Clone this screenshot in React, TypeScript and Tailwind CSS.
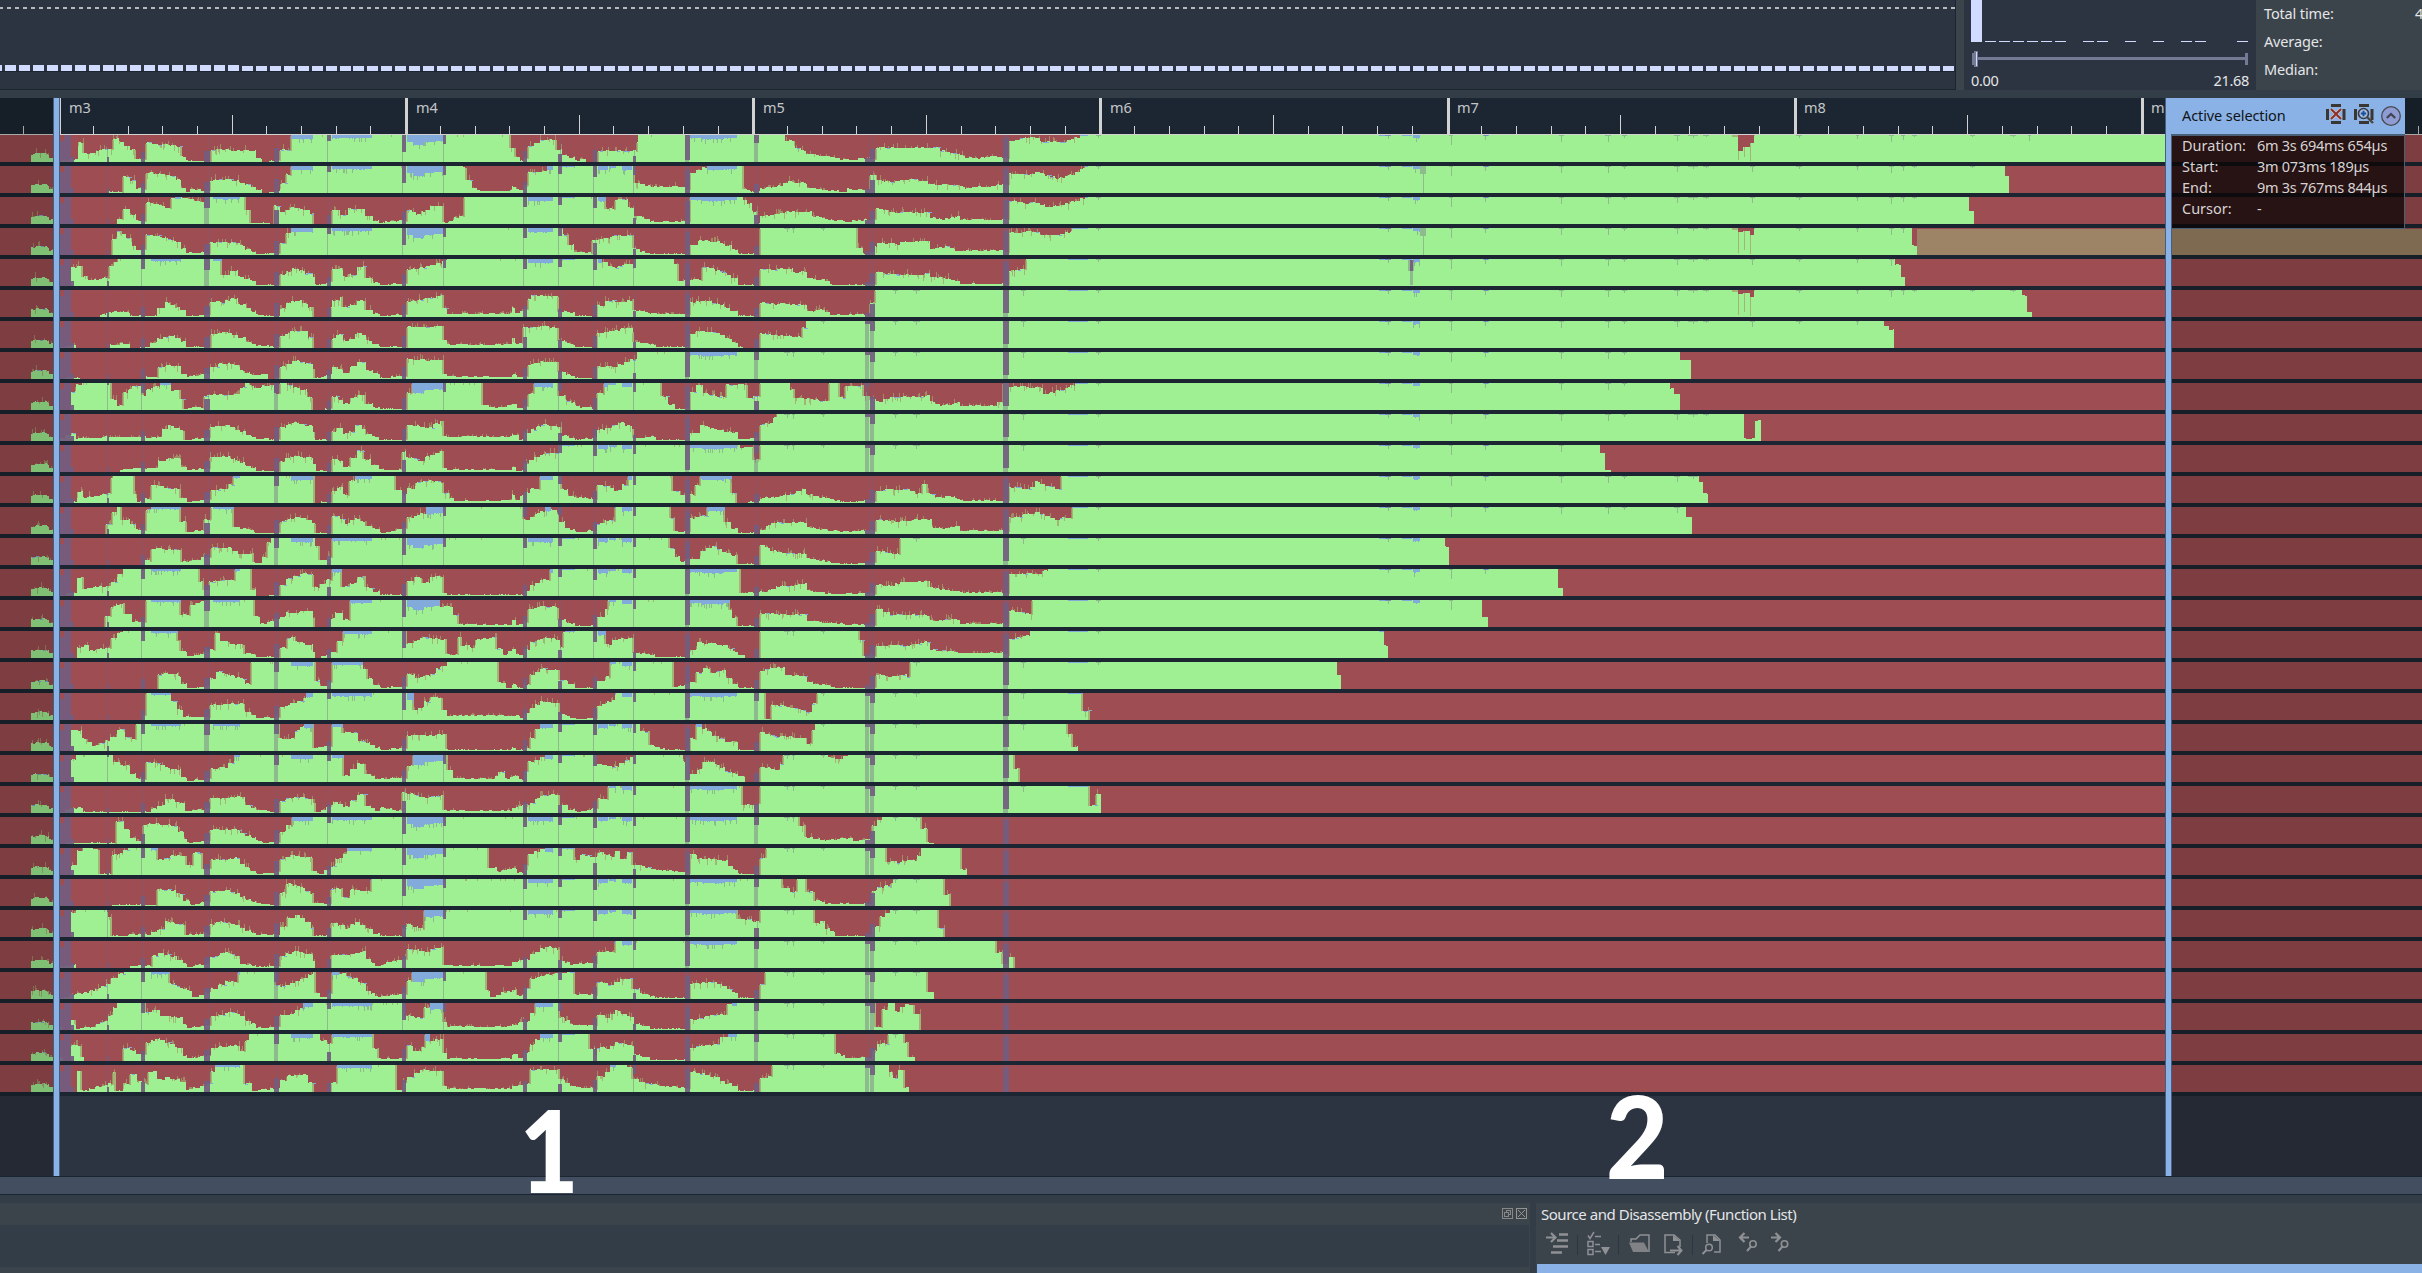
import React from "react";

/* Each lane is a list of "x:height" samples; heights run from 0 to 27 pixels. */
const LANES: string[] = [
  "75:2 78:19 84:8 108:13 113:23 124:16 130:12 136:3 146:19 176:15 182:5 186:1 205:1 211:12 235:11 256:3 262:0 275:2 280:12 291:27 511:13 516:4 520:1 524:3 528:16 540:22 557:12 562:6 575:1 580:3 586:0 598:11 637:20 638:27 785:21 795:13 806:8 825:5 840:2 870:3 876:14 935:14 940:11 955:8 965:4 975:3 985:5 1003:4 1009:21 1030:25 1040:20 1060:20 1080:26 1107:27 2167:0",
  "108:1 123:16 130:12 136:4 146:20 160:18 170:17 176:13 181:5 186:1 190:3 206:2 210:12 225:14 245:8 256:3 262:0 275:2 280:9 286:18 291:27 463:25 467:13 472:5 477:2 512:6 516:3 524:8 528:20 542:22 547:27 635:10 650:6 686:3 690:20 707:27 743:27 744:3 750:1 758:1 760:4 778:7 788:11 806:9 807:5 825:2 845:1 847:4 862:2 870:17 877:12 890:10 900:13 925:12 928:9 960:6 965:4 997:8 1003:8 1009:19 1025:18 1035:20 1045:17 1055:14 1070:18 1080:24 1085:27 2005:16 2009:0",
  "117:5 123:15 130:9 136:3 146:21 165:16 171:25 175:27 200:22 205:27 245:27 246:14 251:1 270:0 274:18 280:12 290:16 303:14 310:10 314:0 332:14 340:9 348:15 357:15 365:8 373:3 379:1 402:3 407:14 416:9 425:14 430:18 441:17 444:1 459:8 464:27 598:27 606:15 615:24 628:16 634:8 644:5 650:2 686:2 690:27 738:27 747:20 752:12 758:1 760:8 775:9 785:12 805:12 812:7 825:4 845:2 870:4 876:15 895:11 925:11 930:6 940:4 955:7 960:4 1003:5 1009:23 1025:20 1035:21 1045:16 1060:19 1075:23 1085:26 1090:27 1969:13 1974:0",
  "112:15 117:23 126:17 132:9 136:5 146:20 160:17 176:13 181:6 186:2 206:2 210:12 235:12 245:5 256:1 275:2 280:12 286:22 291:27 562:27 563:20 569:10 574:2 592:15 605:16 614:19 620:19 634:6 640:3 650:1 686:1 690:10 698:14 715:13 725:9 732:5 738:1 758:0 760:27 857:27 858:7 863:1 870:2 875:8 877:12 895:10 905:13 925:14 930:6 945:8 955:4 1003:3 1009:22 1035:23 1040:20 1055:20 1070:23 1072:27 1912:9 1917:0",
  "71:18 77:20 83:9 88:5 104:8 109:20 114:24 118:27 221:27 222:11 230:15 238:9 250:5 256:1 275:1 280:11 292:17 305:12 313:9 315:1 331:4 332:16 340:17 343:9 348:11 357:19 366:7 373:3 380:1 402:2 407:16 430:20 447:27 596:27 608:20 612:18 627:22 634:27 673:27 674:22 679:5 686:0 690:6 702:18 715:15 722:13 731:8 738:1 758:0 760:16 787:17 793:13 805:14 807:7 825:5 830:1 860:1 870:2 876:13 890:11 925:12 930:9 955:5 960:2 1003:2 1009:15 1020:16 1026:27 1895:21 1901:9 1905:0",
  "100:2 112:5 124:4 130:1 145:1 157:9 165:14 180:7 186:1 205:2 210:15 220:14 230:18 238:12 246:8 256:2 262:1 275:1 280:8 286:14 295:16 308:9 314:0 331:9 332:16 340:20 343:10 350:12 357:16 366:7 373:3 380:1 402:2 407:15 425:18 441:22 444:9 447:3 512:9 515:4 524:8 528:18 531:21 557:20 559:5 570:4 575:1 592:0 597:11 605:16 620:15 633:17 634:6 650:3 686:2 690:14 700:16 718:12 730:6 738:1 758:0 760:14 775:12 780:14 790:12 806:12 807:5 820:7 830:2 865:1 870:14 875:27 2022:21 2027:5 2032:0",
  "72:3 76:0 110:3 125:4 130:0 145:1 150:5 157:9 168:12 181:6 186:1 205:1 211:14 225:15 238:10 246:5 256:2 275:1 280:12 290:16 300:17 308:10 314:0 332:9 336:13 343:7 349:9 355:14 362:12 366:7 372:4 379:1 402:1 407:21 420:20 434:22 444:8 447:3 512:9 515:4 523:20 530:21 556:20 559:7 575:1 592:0 597:15 610:16 625:20 633:15 634:6 650:3 656:1 686:1 690:14 700:17 715:15 725:9 732:5 738:1 743:0 758:0 760:14 790:11 800:10 802:20 806:27 1884:22 1889:18 1894:0",
  "71:1 80:0 146:2 158:12 166:13 181:5 187:2 205:5 210:12 218:15 235:14 240:8 250:4 268:0 275:1 280:12 292:18 305:15 313:10 315:1 331:4 332:11 343:6 350:12 357:16 366:8 373:5 380:1 402:2 407:20 425:18 435:19 444:5 447:2 512:4 517:2 524:3 528:14 540:17 556:17 559:7 566:4 575:1 592:0 597:12 610:12 618:14 630:19 637:27 1680:18 1691:0",
  "71:18 76:25 82:27 109:27 112:10 117:4 123:17 132:23 143:14 146:20 155:23 160:27 171:19 181:10 184:1 195:2 204:14 215:15 235:15 240:22 245:26 254:22 262:24 274:16 280:27 293:22 300:20 307:12 313:0 331:1 332:13 343:6 350:12 357:15 366:6 373:2 380:1 402:1 407:17 412:27 482:27 483:4 495:2 512:6 517:2 524:4 528:16 534:27 558:27 559:14 566:9 575:4 580:2 592:1 597:16 604:27 661:27 662:13 668:5 675:1 686:1 690:18 696:24 703:16 715:13 726:25 748:12 758:14 760:27 788:27 790:20 795:12 818:9 829:26 840:12 845:24 864:14 876:8 890:13 925:14 930:8 940:4 957:7 960:4 997:8 1003:27 1009:23 1035:22 1043:16 1060:20 1075:26 1085:27 1670:21 1674:15 1680:0",
  "71:7 76:2 90:3 108:4 146:2 157:4 162:12 168:15 180:10 185:1 205:3 210:14 225:16 240:9 246:5 256:2 275:1 280:13 292:18 305:15 313:9 315:1 332:9 336:13 343:7 349:9 355:16 362:12 366:7 372:4 379:1 402:1 407:16 425:13 433:17 440:20 444:4 447:4 512:6 519:1 524:8 531:11 541:16 557:14 562:5 575:1 592:3 597:11 605:13 618:18 632:12 634:3 650:4 656:1 686:1 690:8 700:16 710:12 730:8 738:2 758:0 760:16 770:18 773:23 777:27 1744:2 1755:20 1761:0",
  "120:2 146:3 158:11 166:13 181:5 187:2 205:3 210:15 225:15 235:11 245:6 256:1 275:1 280:10 290:15 305:14 313:8 316:1 332:12 338:11 343:5 350:14 357:21 364:12 371:6 379:2 402:20 406:14 418:11 425:15 440:20 444:3 447:2 512:5 516:1 524:8 534:15 545:19 558:27 740:24 754:12 760:27 1600:19 1605:2 1611:0",
  "71:1 77:11 83:5 105:9 111:25 113:27 135:8 137:1 145:4 151:18 170:14 181:5 187:1 206:4 211:13 225:13 228:18 233:27 314:27 315:0 327:1 332:12 337:15 343:8 349:22 355:27 395:27 396:12 402:8 407:14 415:20 427:22 440:20 444:10 450:5 454:2 512:8 515:3 524:10 530:14 540:27 557:27 562:13 568:6 592:3 597:17 605:17 614:12 622:18 628:27 672:27 673:12 680:8 686:0 690:8 695:18 700:27 731:27 732:10 737:0 758:1 760:4 775:6 790:9 802:13 806:8 825:4 840:1 870:2 876:12 890:13 905:13 915:9 922:18 928:9 935:5 950:6 960:2 1003:2 1009:15 1022:14 1030:16 1035:21 1045:17 1055:14 1061:27 1699:20 1703:9 1708:0",
  "106:10 112:22 117:26 122:14 130:9 136:4 146:24 151:27 180:27 181:12 187:2 200:3 204:14 211:27 232:27 234:6 250:4 254:1 275:1 280:12 290:15 300:16 312:10 316:1 332:18 340:15 345:10 355:15 365:8 372:5 380:1 402:5 407:16 420:20 426:27 523:27 524:14 530:17 540:22 545:27 557:20 559:12 565:5 575:2 592:3 597:10 605:13 615:27 670:27 671:15 675:2 690:15 700:18 707:27 724:27 725:12 731:5 738:1 758:0 760:4 771:11 805:11 807:6 820:4 840:2 870:3 876:14 895:12 920:14 932:6 940:5 955:8 960:3 1003:2 1009:16 1028:20 1035:22 1045:18 1055:14 1060:16 1072:27 1686:17 1692:0",
  "145:4 151:16 165:15 182:3 195:5 206:8 211:17 225:17 238:11 254:2 262:8 267:22 271:27 314:27 315:18 320:4 327:8 332:27 668:27 670:16 675:8 680:3 690:6 700:14 712:19 722:13 731:9 738:1 758:0 760:20 770:14 782:12 805:10 807:6 825:3 840:1 870:2 876:14 885:12 898:10 900:27 1445:18 1449:0",
  "72:3 77:18 84:7 106:10 111:13 117:21 123:27 190:27 200:14 204:5 209:14 225:16 235:27 251:27 252:6 256:0 275:1 280:11 286:17 300:22 313:20 314:8 320:12 326:16 332:27 342:9 350:12 357:19 366:8 373:4 380:1 402:1 407:15 414:18 422:13 430:19 444:2 447:1 524:4 530:10 540:16 550:27 740:27 741:2 760:4 768:6 776:9 805:12 807:5 825:2 870:2 876:11 890:9 900:14 925:14 930:8 945:5 960:3 1003:2 1009:21 1035:22 1048:27 1558:8 1563:0",
  "105:10 111:20 120:23 125:12 132:5 146:27 181:12 190:22 205:27 254:27 255:10 260:3 280:10 286:14 305:15 313:8 315:0 331:8 335:14 343:7 350:27 434:27 440:20 453:12 459:3 463:2 512:7 516:2 524:5 528:17 540:21 557:19 559:7 566:4 575:1 597:10 605:18 608:27 725:27 730:17 732:9 738:1 758:0 760:13 790:12 805:13 807:5 825:4 845:2 870:2 876:18 890:12 925:11 930:6 955:7 960:3 1003:2 1009:16 1025:13 1032:27 1482:10 1488:0",
  "77:10 84:13 89:7 105:10 111:19 117:25 123:27 178:17 181:6 187:2 200:4 209:8 215:25 220:17 235:13 245:4 256:1 275:1 280:10 287:20 295:16 305:13 313:5 315:0 331:5 337:16 343:27 402:27 407:14 420:20 440:18 447:3 458:20 462:12 470:10 475:18 492:20 497:9 503:3 512:8 516:3 524:8 530:16 545:20 556:18 560:10 563:25 565:27 597:27 606:13 612:18 628:20 634:5 650:3 655:1 686:1 690:8 697:15 722:12 728:9 738:3 745:0 760:27 858:27 860:18 864:2 876:12 910:13 925:16 930:8 958:5 1003:3 1009:19 1026:22 1030:27 1384:12 1388:0",
  "158:14 170:15 178:12 181:5 187:1 205:2 210:10 216:17 225:14 240:10 245:5 251:27 315:27 316:8 320:2 327:7 332:27 362:27 363:20 368:10 373:4 380:1 402:2 407:14 415:10 430:15 436:20 440:22 447:27 498:27 499:6 506:1 512:4 517:1 524:4 530:14 540:20 556:18 560:8 568:5 575:1 592:1 597:8 605:12 610:27 672:27 674:2 690:6 696:16 703:20 710:16 722:18 726:10 733:5 738:1 758:0 760:17 770:21 785:13 805:12 807:6 825:3 835:1 870:1 876:14 885:12 905:15 907:12 910:27 1337:14 1341:0",
  "143:4 146:27 170:27 171:18 177:10 183:3 205:3 210:15 235:16 245:8 256:2 275:2 280:12 290:16 303:22 306:27 412:27 414:10 418:12 424:18 430:22 443:10 447:4 520:2 524:6 530:11 540:18 556:17 560:5 575:1 592:2 597:14 612:20 615:27 763:27 766:1 771:15 790:12 806:8 812:16 817:27 1083:9 1090:0",
  "71:20 82:12 92:5 105:10 110:14 117:21 125:14 132:12 136:27 276:27 280:12 295:20 304:27 313:27 314:3 327:4 332:27 343:18 350:18 358:10 370:5 380:1 402:2 407:15 430:15 443:17 447:1 512:3 516:1 524:2 530:13 535:22 540:27 637:27 640:19 650:5 665:1 686:1 690:12 696:27 702:22 712:15 725:9 738:1 758:0 760:18 775:14 805:13 807:7 812:20 815:27 1068:17 1073:4 1078:0",
  "71:22 76:27 106:27 113:20 120:16 130:8 136:3 146:20 155:18 170:12 181:4 187:1 206:3 211:13 225:14 228:18 234:27 343:27 344:6 350:13 357:18 366:8 375:3 402:4 407:16 413:27 444:27 448:12 453:3 495:5 498:10 505:3 515:6 519:2 524:10 528:20 545:27 592:27 597:18 612:15 625:22 634:27 678:26 683:20 686:24 690:8 697:12 702:20 715:17 725:10 738:5 745:0 760:15 775:12 780:17 783:27 828:24 835:22 843:25 848:27 1015:13 1020:0",
  "77:5 83:1 110:1 145:1 157:7 165:14 180:10 185:2 205:4 210:15 225:14 235:16 245:8 256:2 275:1 280:12 292:15 305:14 313:10 316:1 331:8 333:11 343:6 350:12 357:18 366:6 375:2 380:5 392:2 402:20 407:19 425:15 441:18 444:3 447:2 512:5 524:8 530:10 540:17 556:18 560:8 568:3 575:1 592:4 598:14 608:27 737:27 743:8 750:8 758:9 760:27 1090:7 1096:18 1101:0",
  "71:1 116:22 124:14 130:6 136:3 143:19 155:20 170:18 178:12 184:5 187:1 205:3 210:14 235:14 245:8 256:3 262:1 275:2 280:12 286:18 292:27 795:27 800:18 806:6 820:3 848:6 853:3 870:6 872:18 877:24 882:27 922:15 928:1 934:0",
  "71:9 77:24 83:27 98:25 100:1 112:20 118:21 128:27 153:27 158:15 170:19 187:10 193:22 203:6 211:15 225:15 235:17 240:10 250:4 256:1 275:3 280:15 290:20 305:17 313:4 317:1 331:8 335:16 343:20 347:27 487:27 489:7 497:3 512:6 517:2 524:10 528:21 545:27 572:27 575:15 580:20 590:17 597:22 610:18 615:24 620:16 627:22 633:10 645:7 656:5 686:2 690:20 697:16 722:14 728:8 738:1 758:0 760:17 766:27 883:27 887:13 897:12 907:15 915:13 917:19 921:27 962:5 967:0",
  "112:1 146:1 157:16 170:15 176:12 183:5 190:1 205:4 210:14 225:16 235:12 245:6 256:2 275:1 280:13 286:22 300:18 310:12 314:2 331:16 332:17 343:8 350:16 365:15 371:27 777:27 783:18 790:14 797:27 807:14 815:5 825:2 870:2 872:15 877:18 890:22 893:27 945:11 951:0",
  "71:24 76:27 108:19 112:1 145:2 157:7 165:15 180:12 186:2 205:3 210:12 220:15 235:12 245:6 256:2 275:2 280:10 287:19 295:22 305:15 311:9 314:1 331:14 345:8 355:15 365:8 373:3 380:1 402:9 407:12 418:8 424:27 738:18 752:15 760:27 811:27 815:13 820:16 825:8 835:1 870:2 872:10 880:20 890:27 939:9 945:0",
  "71:3 76:0 130:2 152:12 158:15 170:11 183:4 187:1 205:4 210:11 225:15 235:12 240:4 256:1 275:2 280:12 292:16 305:14 313:6 315:0 331:12 350:14 360:16 366:8 375:2 402:9 407:19 425:15 435:20 444:3 447:2 512:6 524:8 530:14 545:21 557:18 560:7 570:3 592:5 597:16 610:16 615:27 997:15 1003:4 1009:11 1015:0",
  "83:6 95:10 106:14 111:21 118:25 124:27 170:15 180:10 187:8 192:2 205:6 211:10 225:17 238:27 276:14 280:12 290:16 300:20 308:24 313:27 316:6 320:2 328:5 332:27 352:20 358:16 366:8 375:2 402:5 407:18 412:27 444:5 485:27 487:8 490:2 512:9 517:3 524:10 530:20 545:24 570:26 575:4 592:4 597:17 608:14 620:20 633:10 640:5 655:1 686:1 690:15 712:16 722:13 732:6 738:1 758:0 760:15 765:27 928:7 934:0".replace("444:5 485:27", "485:27"),
  "60:3 62:0 71:10 76:1 91:3 100:8 108:14 113:22 117:27 146:18 152:20 160:14 175:12 183:5 187:2 206:4 211:13 225:17 235:16 245:9 256:2 275:3 280:14 290:16 300:22 303:27 403:27 405:14 415:12 424:22 430:27 444:8 447:3 512:5 524:8 530:16 535:27 558:27 560:12 570:5 592:4 597:15 605:12 615:19 627:13 634:6 650:1 686:0 690:10 710:14 722:15 727:25 732:27 870:27 876:3 882:20 888:26 895:18 905:25 915:16 921:0",
  "60:3 63:0 71:15 82:4 84:0 123:13 136:6 146:18 155:22 165:18 175:13 183:5 187:2 206:5 211:13 225:14 235:15 240:10 245:20 249:27 314:27 320:20 327:17 332:27 372:27 374:12 379:2 402:2 407:15 413:10 421:14 425:27 430:20 440:22 444:8 447:2 512:6 518:2 524:8 530:16 535:21 540:27 588:27 590:12 595:5 597:13 605:12 615:18 632:14 634:6 650:1 686:1 690:13 712:16 720:24 728:27 833:27 836:7 845:2 870:3 872:10 877:17 888:26 905:18 909:4 915:0",
  "77:20 82:1 108:8 113:20 116:1 123:8 130:18 137:10 146:8 148:20 157:12 165:15 180:10 186:2 206:8 211:20 215:27 244:27 245:8 252:1 275:3 280:11 287:16 300:17 308:9 314:0 331:9 337:27 395:27 397:2 403:9 407:15 420:22 430:20 441:20 444:5 447:3 512:6 524:8 530:22 557:22 560:12 570:5 592:3 597:15 605:20 610:27 632:24 633:12 645:8 665:5 686:3 690:20 700:18 715:14 725:8 738:1 758:0 760:14 768:16 772:27 887:27 889:20 893:14 898:22 905:4 909:0",
];

/* x, width, depth when the lane is busy, height when the lane is idle */
const EVENTS = [
  [107, 2, 2, 5],
  [141, 4, 10, 10],
  [204, 6, 11, 11],
  [274, 5, 10, 14],
  [327, 4, 6, 9],
  [402, 4, 17, 12],
  [443, 3, 9, 0],
  [523, 4, 10, 11],
  [558, 4, 8, 8],
  [593, 4, 11, 12],
  [633, 3, 9, 6],
  [685, 5, 25, 23],
  [754, 5, 8, 9],
  [865, 5, 3, 4],
  [870, 5, 10, 13],
  [1003, 6, 23, 24],
];

/* start, end, depth of the waiting-time caps */
const CAPS = [
  [151, 181, 2],
  [213, 240, 2],
  [291, 313, 4],
  [332, 372, 3],
  [407, 413, 7],
  [413, 424, 10],
  [424, 434, 7],
  [434, 444, 6],
  [528, 553, 4],
  [561, 575, 1],
  [598, 608, 4],
  [609, 616, 2],
  [622, 632, 4],
  [690, 702, 3],
  [702, 724, 4],
  [724, 737, 3],
  [1068, 1088, 1],
  [1379, 1391, 1],
  [1402, 1412, 1],
  [1413, 1420, 3],
  [1484, 1489, 1],
];

/* x, width, stem depth of the short marks on top of busy lanes */
const NIBS = [
  [784, 6, 3],
  [792, 3, 4],
  [821, 4, 2],
  [893, 5, 3],
  [913, 7, 3],
  [1021, 5, 5],
  [1096, 5, 2],
  [1385, 6, 3],
  [1449, 4, 9],
  [1483, 5, 4],
  [1559, 5, 6],
  [1605, 6, 6],
  [1622, 5, 2],
  [1674, 6, 5],
  [1688, 10, 2],
  [1703, 6, 1],
  [1750, 5, 5],
  [1796, 6, 2],
  [1856, 3, 3],
  [1889, 5, 6],
  [1901, 4, 4],
  [1912, 5, 1],
  [1970, 5, 1],
  [2010, 6, 1],
  [2028, 3, 5],
];

const H = 27;

function rand(seed: number) {
  const v = Math.sin(seed * 127.1 + 311.7) * 43758.5453;
  return v - Math.floor(v);
}

function heightsOf(lane: string): number[] {
  const out = new Array<number>(2422).fill(0);
  const pts = ("31:7 35:8 47:7 49:4 53:0 " + lane).split(" ").map((p) => p.split(":").map(Number));
  pts.forEach(([x0, h0], i) => {
    const next = pts[i + 1];
    if (!next) return;
    const [x1, h1] = next;
    const steps = Math.max(1, Math.round((x1 - x0) / 6));
    // small differences ramp in short steps, large ones jump at the next sample
    const ramps = steps > 1 && x1 - x0 < 34 && h1 > 0 && Math.abs(h1 - h0) < 8;
    for (let x = x0; x < x1; x++) {
      const k = Math.floor(((x - x0) / (x1 - x0)) * steps);
      out[x] = ramps ? h0 + ((h1 - h0) * k) / steps : h0;
    }
  });
  return out;
}

const box = (x: number, y: number, w: number, h: number) => `M${x} ${y}h${w}v${h}h${-w}z`;

function Lane({ index }: { index: number }) {
  const h = heightsOf(LANES[index]);
  let green = "";
  let olive = "";
  let blue = "";
  let purple = "";
  let mist = "";
  let notch = "";

  let start = 0;
  const level = h.map((v) => (v >= 26 ? H : Math.round(v)));
  const wobble = level.map((v, x) => {
    if (v < 2 || v >= H) return v === 1 && rand(x * 3 + index * 71) > 0.8 ? 2 : v;
    return Math.min(H, v + (rand(Math.floor(x / 3) * 1.7 + index * 37) > 0.6 ? 1 : 0));
  });
  for (let x = 1; x <= 2422; x++) {
    if (x === 2422 || wobble[x] !== wobble[start]) {
      if (wobble[start] > 0) green += box(start, H - wobble[start], x - start, wobble[start]);
      start = x;
    }
  }

  for (let x = 32; x < 1100; x++) {
    const v = wobble[x];
    const r = rand(x * 1.31 + index * 53.7);
    if (v > 2 && v < 26) {
      if (r > 0.8) {
        const up = Math.min(H - v, 1 + Math.floor(rand(x + index * 11) * (v > 6 ? 5 : 2)));
        olive += box(x, H - v - up, 1, up);
      } else if (r < 0.1 && v > 7) {
        olive += box(x, H - v, 1, 2 + Math.floor(rand(x * 7 + index) * 5));
      } else if (r > 0.72 && r < 0.76 && v > 7) {
        blue += box(x, H - v, 3, 1);
      }
    } else if (v === H && r > 0.965 && x < 760) {
      olive += box(x, 0, 1, 2);
    }
    const prev = wobble[x - 1];
    if (Math.abs(prev - v) > 8 && x > 80) {
      olive += v > prev ? box(x - 1, H - v + 1, 2, v - prev) : box(x - 2, H - prev, 2, prev - v);
    }
  }

  CAPS.forEach(([a, b, depth]) => {
    for (let x = a; x < b; x++) {
      if (level[x] === H) {
        const d = depth + (depth > 1 && rand(x * 2.3 + index) > 0.82 ? 1 : 0);
        blue += box(x, 0, 1, d);
        if (depth > 1 && rand(x * 5.1 + index) > 0.88) mist += box(x, d, 1, 4);
      }
    }
  });

  NIBS.forEach(([x, w, d]) => {
    if (level[x] === H && level[x + w] === H) {
      mist += box(x, 0, w, 1) + box(x + Math.floor(w / 2), 1, 1, d);
    }
  });

  EVENTS.forEach(([x, w, d, idle]) => {
    const busy = Math.max(level[x], level[x - 3]) > 22 || (x < 1000 && level[x + 1] > 22);
    if (busy) {
      purple += box(x, 0, w, d);
      mist += box(x, d, w > 4 ? w - 1 : 1, H - d);
    } else if (idle) {
      purple += box(x, H - idle, w, idle);
      mist += box(x + w - 2, 0, 1, H - idle);
      if (w > 4 && idle > 20) mist += box(x, 0, w, H - idle);
    }
  });

  purple += box(64, 0, 7, H) + box(60, 6, 4, H - 6) + box(71, 22, 3, 5);
  if (index === 0 || index === 5 || index === 3) {
    const k = index === 0 ? 4 : 1;
    notch += box(1738, 0, 5, 4 * k) + box(1743, 0, 7, 3 * k) + box(1750, 0, 4, index === 0 ? 8 : 7);
    olive += box(1738, 0, 1, 25) + box(1744, 0, 1, 22) + box(1750, 0, 1, 26) + box(1732, 0, 6, 2);
  }
  if (index === 1 || index === 3) mist += box(1420, 0, 6, 8) + box(1423, 8, 1, 19);
  if (index === 4) {
    purple += box(1410, 1, 3, 11);
    mist += box(1408, 1, 6, 11) + box(1410, 12, 3, 14);
  }

  return (
    <div className="h-[27px] w-full shrink-0 overflow-hidden bg-[#9e4d52]">
      <svg className="block" width={2422} height={27} viewBox="0 0 2422 27" shapeRendering="crispEdges">
        <path d={green} fill="#9ff092" />
        <path d={olive} fill="#a3a06c" opacity={0.75} />
        <path d={blue} fill="#82aadb" />
        <path d={mist} fill="#715f84" opacity={0.36} />
        <path d={notch} fill="#9e4d52" />
        <path d={purple} fill="#735c80" opacity={0.93} />
        {index === 3 && <rect x={1917} y={1} width={505} height={26} fill="#9e8466" />}
      </svg>
    </div>
  );
}

const RULER_MARKS = Array.from({ length: 71 }, (_, i) => ({
  x: 58.6 + (i - 1) * 34.71,
  kind: (i - 1) % 10 === 0 ? "major" : (i + 4) % 10 === 0 && i > 0 ? "half" : "minor",
  label: (i - 1) % 10 === 0 ? `m${3 + (i - 1) / 10}` : "",
}));

function Ruler() {
  return (
    <div className="h-[37px] w-full shrink-0 border-b border-[#d2d2d2] bg-[#1c2632]">
      <svg className="block" width={2422} height={36} shapeRendering="crispEdges">
        {RULER_MARKS.map((m, i) => {
          const x = Math.floor(m.x);
          if (m.kind === "major")
            return <rect key={i} x={i === 1 ? 59 : x} y={0} width={i === 1 ? 2 : 3} height={36} fill="#d2d2d2" />;
          const len = m.kind === "half" ? 19 : 8;
          return <rect key={i} x={x} y={36 - len} width={1} height={len} fill="#d2d2d2" />;
        })}
        {RULER_MARKS.filter((m) => m.label).map((m) => (
          <text key={m.label} x={Math.round(m.x) + 10} y={15} fontSize={14.5} fill="#c3c6c9" className="font-['Noto_Sans',sans-serif]">
            {m.label}
          </text>
        ))}
      </svg>
    </div>
  );
}

function FramePlot() {
  const bars = Array.from({ length: 141 }, (_, i) => -9 + i * 13.94);
  return (
    <div className="h-[90px] w-[1956px] shrink-0 border-r border-b border-[#1b2530] bg-[#2d3441]">
      <svg className="block" width={1955} height={89} shapeRendering="crispEdges">
        <line x1={0} x2={1955} y1={8} y2={8} stroke="#b8bab9" strokeWidth={2} strokeDasharray="4 4" strokeDashoffset={1} />
        {bars.map((x, i) => {
          const tall = x < 235;
          return <rect key={i} x={Math.round(x)} y={tall ? 65 : 66} width={11} height={tall ? 6 : 5} fill="#d1daff" />;
        })}
        <rect x={0} y={71} width={1955} height={1} fill="#1b2530" />
      </svg>
    </div>
  );
}

const HISTOGRAM = [0, 1, 2, 3, 4, 5, 7, 8, 10, 12, 14, 15, 18];

function Histogram() {
  return (
    <div className="flex h-[90px] w-[292px] shrink-0 flex-col bg-[#2d3441] pl-[7px] pr-[7px]">
      <svg className="block shrink-0" width={278} height={69} shapeRendering="crispEdges">
        <rect x={0} y={0} width={11} height={42} fill="#d1daff" />
        {HISTOGRAM.map((k) => (
          <rect key={k} x={14 + k * 14} y={41} width={11} height={1} fill="#d1daff" />
        ))}
        <rect x={1} y={53} width={3} height={12} fill="#737a94" />
        <rect x={3} y={51} width={4} height={16} fill="#737a94" />
        <rect x={5} y={52} width={1} height={14} fill="#d1daff" />
        <rect x={7} y={57} width={268} height={3} fill="#737a94" />
        <rect x={274} y={53} width={3} height={12} fill="#737a94" />
      </svg>
      <div className="flex justify-between text-[14.5px] leading-[23px] tracking-[-0.3px] text-[#e4e6e8]">
        <span>0.00</span>
        <span>21.68</span>
      </div>
    </div>
  );
}

function Stats() {
  return (
    <div className="flex h-[90px] flex-1 flex-col overflow-hidden bg-[#3b434b] pl-2 text-[14.5px] leading-[28px] tracking-[-0.15px] text-[#e4e6e8]">
      <div className="-mt-[1px] flex justify-between">
        <span>Total time:</span>
        <span className="w-[7px] shrink-0">4</span>
      </div>
      <span>Average:</span>
      <span>Median:</span>
    </div>
  );
}

function SelectionFrame() {
  return (
    <svg width={22} height={22} viewBox="0 0 22 22" className="block">
      <path d="M6 1h10v3H6zM6 18h10v3H6zM1 6h3v11H1zM17.500 6h3v11h-3z" fill="#3a3632" />
    </svg>
  );
}

const SELECTION = [
  ["Duration:", "6m 3s 694ms 654µs"],
  ["Start:", "3m 073ms 189µs"],
  ["End:", "9m 3s 767ms 844µs"],
  ["Cursor:", "-"],
];

function SelectionPopup() {
  return (
    <div className="absolute top-0 left-[2166px] w-[239px]">
      <div className="flex h-9 items-center bg-[#8ab2e6] pr-1 pl-4">
        <span className="flex-1 text-[14.5px] tracking-[-0.1px] text-[#101418]">Active selection</span>
        <div className="relative mr-[6px] mb-1 h-[22px] w-[22px]">
          <SelectionFrame />
          <svg className="absolute inset-0" width={22} height={22}>
            <path d="M6 6l10 10M16 6L6 16" stroke="#e8c9bb" strokeWidth={3.4} opacity={0.7} />
            <path d="M6 6l10 10M16 6L6 16" stroke="#8e2f28" strokeWidth={2} />
          </svg>
        </div>
        <div className="relative mr-[6px] mb-1 h-[22px] w-[22px]">
          <SelectionFrame />
          <svg className="absolute inset-0" width={22} height={22} fill="none">
            <circle cx={10.5} cy={10.5} r={5} stroke="#3a3a42" strokeWidth={1.6} fill="#a3bde2" />
            <path d="M10.5 7.8v5.4M7.800 10.500h5.400" stroke="#1c4f9a" strokeWidth={1.9} />
            <path d="M14 14l6 6" stroke="#4a463f" strokeWidth={2.4} />
          </svg>
        </div>
        <svg width={20} height={20} viewBox="0 0 20 20" fill="none" className="block">
          <circle cx={10} cy={10} r={9.3} fill="#8f9bd3" stroke="#4a4a52" strokeWidth={1.3} />
          <path d="M5.8 12L10 8l4.2 4" stroke="#3f4450" strokeWidth={2.2} />
        </svg>
      </div>
      <div className="ml-[5px] h-[95px] border border-t-2 border-[#4a6079] bg-[#0c0505]/75 pl-[10px] text-[14.5px] leading-[21px] tracking-[-0.27px] text-[#d6d2d2]">
        {SELECTION.map(([k, v]) => (
          <div key={k} className="relative -top-px flex">
            <span className="w-[75px] tracking-normal">{k}</span>
            <span className="whitespace-nowrap">{v}</span>
          </div>
        ))}
      </div>
    </div>
  );
}

function Timeline() {
  return (
    <div className="relative flex h-[1078px] shrink-0 flex-col overflow-hidden">
      <Ruler />
      <div className="flex shrink-0 flex-col gap-1 bg-[#1c2632] pb-1">
        {LANES.map((_, i) => (
          <Lane key={i} index={i} />
        ))}
      </div>
      <div className="flex-1 bg-[#2d3441]" />
      <div className="absolute inset-y-0 left-0 w-[53px] bg-black/20" />
      <div className="absolute inset-y-0 right-0 w-[250px] bg-black/20" />
      <div className="absolute inset-y-0 left-[53px] w-[7px] border-x border-[#44607f] bg-[#8ab2e6]" />
      <div className="absolute inset-y-0 left-[2165px] w-[7px] border-x border-[#44607f] bg-[#8ab2e6]" />
      <SelectionPopup />
    </div>
  );
}

function WindowButtons() {
  return (
    <svg width={26} height={12} viewBox="0 0 26 12" fill="none" stroke="#96938f" shapeRendering="crispEdges">
      <path d="M.5.5h10v10H.5zM2.5 4.5h4v4h-4zM4.5 4V2.5h4v4H7" strokeOpacity={0.85} />
      <path d="M14.5.5h10v10h-10z" />
      <path d="M16 2l7 7M23 2l-7 7" shapeRendering="auto" />
    </svg>
  );
}

function Toolbar() {
  return (
    <svg width={260} height={26} viewBox="0 0 260 26" fill="none" stroke="#8f9194" strokeWidth={1.7} className="block">
      <g>
        <path d="M0 6.500h9M5 2l4.500 4.500L5 11" strokeWidth={2.200} />
        <path d="M13 3.500h9M11 9.500h11M7 15.500h15M5 21.500h11" strokeWidth={2.400} />
      </g>
      <path d="M31.500 4v20M72.500 4v20M146.500 4v20" stroke="#2d3640" strokeWidth={1} />
      <g>
        <path d="M42 4.500l2 3 4-6.500M49 5.500h6M49 13.500h5M49 20.500h6" strokeWidth={1.5} />
        <path d="M42 10.500h5v5h-5zM42 18.500h5v5h-5z" strokeWidth={1.5} />
        <path d="M55 16h9l-4.500 8z" fill="#8f9194" stroke="none" />
      </g>
      <g>
        <path d="M85 11V8h5l4-4h9v17" strokeWidth={1.500} />
        <path d="M83 11.500h15l5 9.500H87z" fill="#808285" stroke="none" />
      </g>
      <g>
        <path d="M129 21.500h-10V4h9l6 5v7" strokeWidth={1.500} />
        <path d="M127 4l7 6h-7z" fill="#8f9194" stroke="none" />
        <path d="M124 19.500h11M131.500 15l4 4.500-4 4.500" strokeWidth={2} />
      </g>
      <g>
        <path d="M161 12V4h8l5 5v12h-6" strokeWidth={1.500} />
        <path d="M167 4l7 6h-7z" fill="#8f9194" stroke="none" />
        <circle cx={163} cy={16.500} r={3.300} strokeWidth={1.500} />
        <path d="M160.500 19l-4 4" strokeWidth={2} />
      </g>
      <g>
        <path d="M194 6.500h9M198.500 2L194 6.500l4.500 4.500" strokeWidth={2.200} />
        <circle cx={207} cy={13} r={3.200} strokeWidth={1.600} />
        <path d="M205 15.500l-4 4.500" strokeWidth={2} />
      </g>
      <g>
        <path d="M225 6.500h9M229.500 2L234 6.500l-4.500 4.500" strokeWidth={2.200} />
        <circle cx={238.500} cy={13} r={3.200} strokeWidth={1.600} />
        <path d="M236.500 15.500l-4 4.500" strokeWidth={2} />
      </g>
    </svg>
  );
}

export default function App() {
  return (
    <div className="relative flex h-[1273px] w-[2422px] flex-col overflow-hidden bg-[#333d48] font-['Noto_Sans',sans-serif]">
      <div className="flex h-[98px] shrink-0 items-start">
        <FramePlot />
        <div className="h-[90px] w-2 shrink-0 bg-[#3b434b]" />
        <Histogram />
        <Stats />
      </div>
      <Timeline />
      <div className="mb-2 h-[19px] shrink-0 border-y border-[#1b2530] bg-[#434f60]" />
      <div className="flex flex-1 gap-1.5">
        <div className="flex w-[1530px] shrink-0 flex-col bg-[#3b434b]">
          <div className="flex h-[22px] items-center justify-end pr-0.5">
            <WindowButtons />
          </div>
          <div className="mr-px h-[42px] bg-[#333d48]" />
        </div>
        <div className="flex flex-1 flex-col bg-[#3b434b]">
          <div className="h-[24px] pl-[5px] text-[15px] leading-[23px] tracking-[-0.47px] text-[#e4e6e8]">
            Source and Disassembly (Function List)
          </div>
          <div className="h-[37px] pt-1 pl-[10px]">
            <Toolbar />
          </div>
          <div className="ml-px flex-1 bg-[#8ab2e6]" />
        </div>
      </div>
      <span className="absolute top-[1080px] left-[516px] origin-center scale-x-90 font-[Lato] text-[114px] leading-[137px] font-black text-white">1</span>
      <span className="absolute top-[1066px] left-[1604px] origin-center scale-x-95 font-[Lato] text-[114px] leading-[137px] font-black text-white">2</span>
    </div>
  );
}
